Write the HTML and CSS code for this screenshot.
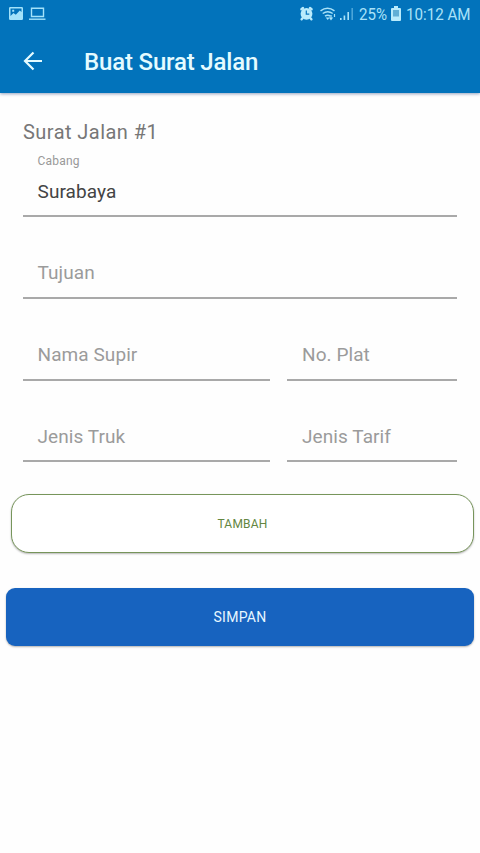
FILE: index.html
```html
<!DOCTYPE html>
<html lang="id">
<head>
<meta charset="utf-8">
<meta name="viewport" content="width=device-width, initial-scale=1">
<title>Buat Surat Jalan</title>
<link rel="stylesheet" href="styles.css">
</head>
<body>
<header class="header">
  <div class="status">
    <svg class="status-left" width="40" height="16" viewBox="0 0 40 16" fill="none" stroke="#a3e2fa">
      <path fill="#a3e2fa" fill-rule="evenodd" stroke="none" d="M2.200 1h11.600q1.200 0 1.200 1.200v10.600q0 1.200-1.200 1.200H2.200Q1 14 1 12.800V2.200Q1 1 2.200 1zM2.500 2.500v7.500l3-3 2.300 1.700 4-4.200 1.700 1.500v-3.500zM4.200 3.700h2v2h-2z"/>
      <path stroke-width="1.400" d="M23.500 2.200h12v8.300h-12z"/>
      <path stroke-width="1.400" d="M21 13.200h16.500"/>
    </svg>
    <svg class="status-right" width="58" height="16" viewBox="0 0 58 16" fill="none" stroke="#a9e2f8">
      <circle cx="7.500" cy="7.800" r="5.900" fill="#b9ebfc" stroke="none"/>
      <path stroke="#b9ebfc" stroke-width="2.400" stroke-linecap="round" d="M2.400 3.200 4 2M12.600 3.200 11 2M3.500 12.200l-.9 1.100M11.500 12.200l.9 1.100"/>
      <path stroke="#0877bf" stroke-width="1.200" d="M7.300 4.600v3.600h3"/>
      <path stroke-width="1.500" d="M21.500 4.800q7-5.200 14 0M23.700 7.500q5-3.600 10 0M26 10.100q2.700-1.900 5.400 0"/>
      <path fill="#a9e2f8" stroke="none" d="m28.700 14-2-2.400h4z"/>
      <path stroke-width="1.200" d="M32 9v4M35.500 8v3M30.500 11.500l1.500 2 1.500-2"/>
      <path stroke-width="1.600" d="M41.800 12v2M45.400 9.500V14M49.200 6V14"/>
      <path stroke="#4ba5d9" stroke-width="1.600" d="M53.200 2v12"/>
    </svg>
    <span class="percent">25%</span>
    <svg class="battery" width="10" height="15" viewBox="0 0 10 15">
      <path fill="#b9ebfc" d="M3 0h4v2h2q1 0 1 1v11q0 1-1 1H1q-1 0-1-1V3q0-1 1-1h2z"/>
      <path fill="#61afd6" d="M2 4h6v6.500H2z"/>
    </svg>
    <span class="clock">10:12 AM</span>
  </div>
  <div class="bar">
    <svg class="back" width="20" height="20" viewBox="0 0 20 20" fill="none" stroke="#e4fbff" stroke-width="2.200"><path d="M19 10H2.500M10.500 1.500 2 10l8.500 8.500"/></svg>
    <h1 class="title">Buat Surat Jalan</h1>
  </div>
</header>
<main class="form">
  <h2 class="heading">Surat Jalan #1</h2>
  <div class="field filled"><span class="label">Cabang</span><span class="value">Surabaya</span></div>
  <div class="field"><span class="hint">Tujuan</span></div>
  <div class="row">
    <div class="field"><span class="hint">Nama Supir</span></div>
    <div class="field"><span class="hint">No. Plat</span></div>
  </div>
  <div class="row last">
    <div class="field"><span class="hint">Jenis Truk</span></div>
    <div class="field"><span class="hint">Jenis Tarif</span></div>
  </div>
</main>
<div class="actions">
  <button class="add">TAMBAH</button>
  <button class="save">SIMPAN</button>
</div>
</body>
</html>
```
FILE: styles.css
```css
* { box-sizing: border-box; }
body { margin: 0; min-height: 853px; background: #fefefe; font-family: Roboto, "Liberation Sans", sans-serif; }
.header { height: 93px; background: #0273bb; box-shadow: 0 1px 3px rgba(20, 50, 110, .45); }
.status { display: flex; align-items: center; height: 29px; padding: 0 10.5px 0 8px; color: #a9e2f8; font-size: 17px; line-height: 29px; }
.status-left { margin-top: -1px; }
.status-right { margin-left: auto; margin-top: -1px; }
.percent, .clock { display: block; white-space: nowrap; transform: scaleX(.89); transform-origin: left; }
.percent { width: 28px; margin-left: 2px; }
.battery { margin: -2px 5px 0 4px; }
.clock { width: 64px; }
.bar { display: flex; align-items: center; height: 64px; padding-left: 23px; }
.back { margin-top: -1px; }
.title { margin: 2px 0 0 41px; color: #e4fbff; font-size: 24px; line-height: 32px; font-weight: 500; letter-spacing: -.17px; white-space: nowrap; }
.form { padding: 25px 23px 0; }
.heading { margin: 0; color: #777; font-size: 20px; line-height: 28px; font-weight: 400; letter-spacing: .45px; }
.field { height: 82px; padding: 43px 0 0 14.5px; border-bottom: 2px solid #a9a9a9; }
.field.filled { height: 71px; padding-top: 7px; }
.last .field { height: 81px; }
.label, .value, .hint { display: block; white-space: nowrap; }
.label { color: #999; font-size: 12px; line-height: 17px; letter-spacing: .2px; }
.value { margin-top: 9px; color: #444; font-size: 19px; line-height: 26px; letter-spacing: .1px; }
.hint { color: #9b9b9b; font-size: 19px; line-height: 26px; letter-spacing: .08px; }
.row { display: grid; grid-template-columns: 247px 1fr; column-gap: 17px; }
.row .field + .field { padding-left: 15px; }
.actions { display: flex; flex-direction: column; gap: 35px; padding: 32px 6px 0; }
button { display: block; height: 58px; padding: 0; font-family: inherit; font-weight: 400; }
.add { height: 59px; margin-left: 5px; padding-top: 1px; border: 1.5px solid #77955b; border-radius: 18px; background: #fff; color: #638641; font-size: 12px; letter-spacing: .2px; box-shadow: 0 1px 2px rgba(0, 0, 0, .28); }
.save { border: 0; border-radius: 9px; background: #1763bf; color: #e7f7ff; font-size: 14px; letter-spacing: .3px; box-shadow: 0 1px 2px rgba(0, 0, 0, .3); }
```
